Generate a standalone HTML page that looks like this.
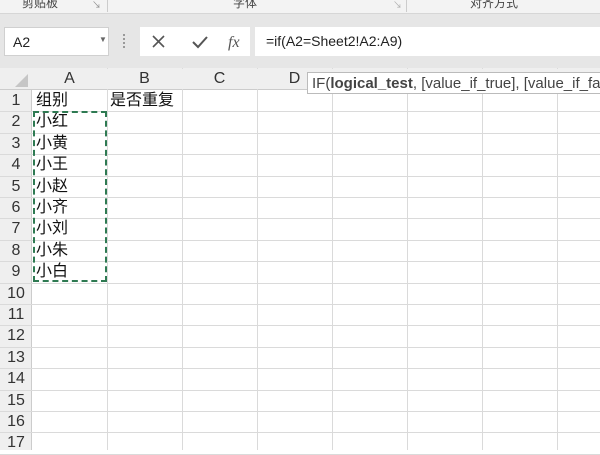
<!DOCTYPE html>
<html><head><meta charset="utf-8"><style>
*{margin:0;padding:0;box-sizing:border-box}
body{width:600px;height:450px;overflow:hidden;background:#fff;font-family:"Liberation Sans","Noto Sans CJK SC",sans-serif;position:relative}
.a{position:absolute}
.rib{left:0;top:0;width:600px;height:14px;background:#f3f3f3;border-bottom:1px solid #d6d6d6;font-size:12px;color:#444}
.fb{left:0;top:14px;width:600px;height:54px;background:#e6e6e6}
.box{background:#fff;border:1px solid #d0d0d0}
.hdr{background:#efefef;color:#333;font-size:16px;text-align:center}
.cell{font-size:16px;color:#111}
</style></head><body>
<div class="a rib">
<span class="a" style="left:22px;top:-6px">剪贴板</span>
<span class="a" style="left:92px;top:-2px;font-size:9px;color:#888">↘</span>
<div class="a" style="left:107px;top:0;width:1px;height:12px;background:#ccc"></div>
<span class="a" style="left:233px;top:-6px">字体</span>
<span class="a" style="left:393px;top:-2px;font-size:9px;color:#aaa">↘</span>
<div class="a" style="left:406px;top:0;width:1px;height:12px;background:#ccc"></div>
<span class="a" style="left:470px;top:-6px">对齐方式</span>
</div>
<div class="a fb"></div>
<div class="a box" style="left:4px;top:27px;width:105px;height:29px;font-size:14px;padding:6px 0 0 8px;color:#222">A2<span class="a" style="left:94px;top:7px;font-size:8px;color:#666">▼</span></div>
<div class="a" style="left:123px;top:34px;width:2px;height:14px;border-left:2px dotted #999"></div>
<div class="a box" style="left:140px;top:27px;width:110px;height:29px;border:none">
<svg width="110" height="29"><path d="M13 9l11 11M24 9L13 20" stroke="#555" stroke-width="1.6"/><path d="M53 15l5 5 9-10" stroke="#555" stroke-width="2" fill="none"/><text x="88" y="20" font-family="Liberation Serif" font-style="italic" font-size="16" fill="#555">fx</text></svg></div>
<div class="a box" style="left:255px;top:27px;width:350px;height:29px;border:none;font-size:14px;padding:6px 0 0 11px;color:#222">=if(A2=Sheet2!A2:A9)</div>
<div class="a" style="left:0;top:68px;width:600px;height:382px;background:#fff"></div>
<div class="a hdr" style="left:0;top:68px;width:600px;height:22px;border-bottom:1px solid #ccc"></div>
<svg class="a" style="left:12px;top:72px" width="18" height="16"><path d="M16 2V15H3z" fill="#c6c6c6"/></svg>
<div id="g"></div>
<div class="a" style="left:307px;top:72px;width:300px;height:22px;background:#fff;border:1px solid #bbb;font-size:15px;padding:2px 0 0 4px;color:#444;white-space:nowrap">IF(<b>logical_test</b>, [value_if_true], [value_if_false])</div>
<div class="a" style="left:33px;top:111px;width:74px;height:171px;border:2px dashed #2e7a52"></div>
<script>
var g='',cols=['A','B','C','D','','','',''];
for(var i=0;i<8;i++){var x=32+75*i;g+='<div class="a" style="left:'+(x+75)+'px;top:68px;width:1px;height:382px;background:#dadada"></div>';
g+='<div class="a hdr" style="left:'+x+'px;top:69px;width:75px;height:20px;line-height:20px">'+cols[i]+'</div>';}
g+='<div class="a" style="left:0;top:90px;width:32px;height:360px;background:#efefef;border-right:1px solid #ccc"></div>';
var t=['组别','小红','小黄','小王','小赵','小齐','小刘','小朱','小白'];
for(var r=0;r<17;r++){var y=90+21.4*r;
g+='<div class="a" style="left:0;top:'+(y+21.4)+'px;width:600px;height:1px;background:#dadada"></div>';
g+='<div class="a hdr" style="left:0;top:'+y+'px;width:32px;height:21px;line-height:21px;background:none">'+(r+1)+'</div>';
if(t[r])g+='<div class="a cell" style="left:36px;top:'+(y+1)+'px;line-height:20px">'+t[r]+'</div>';}
g+='<div class="a cell" style="left:110px;top:91px;line-height:20px">是否重复</div>';
document.getElementById('g').innerHTML=g;
</script>
</body></html>
